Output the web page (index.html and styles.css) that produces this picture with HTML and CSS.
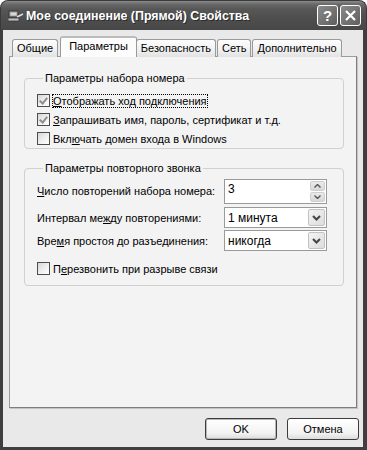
FILE: index.html
```html
<!DOCTYPE html>
<html lang="ru">

<head>
  <meta charset="UTF-8" />
  <title>Мое соединение (Прямой) Свойства</title>
  <link rel="stylesheet" href="styles.css">
</head>

<body>
  <div class="window">
    <div class="titlebar">
      <svg class="title-icon" width="16" height="14" viewBox="0 0 16 14">
        <rect x="1" y="2" width="9" height="6" fill="#9a9a9a" stroke="#3a3a3a" />
        <rect x="2.5" y="3.5" width="6" height="3" fill="#d8d8d8" />
        <path d="M9 8 L15 5" stroke="#e0e0e0" stroke-width="1.5" />
        <rect x="0" y="9" width="11" height="3" fill="#bdbdbd" stroke="#3a3a3a" stroke-width="0.8" />
      </svg>
      <span class="title">Мое соединение (Прямой) Свойства</span>
      <div class="caption-buttons">
        <span class="cap-btn">?</span>
        <span class="cap-btn">
          <svg width="13" height="13" viewBox="0 0 13 13">
            <path d="M2 2 L11 11 M11 2 L2 11" stroke="#fff" stroke-width="2.2" />
          </svg>
        </span>
      </div>
    </div>

    <div class="frame">
      <div class="tabs">
        <div class="tab">Общие</div>
        <div class="tab active">Параметры</div>
        <div class="tab">Безопасность</div>
        <div class="tab">Сеть</div>
        <div class="tab">Дополнительно</div>
      </div>

      <div class="panel">
        <!-- набор номера -->
        <fieldset class="group group-dial">
          <legend>Параметры набора номера</legend>
          <div class="check-row">
            <span class="box checked"></span>
            <span class="focus"><u>О</u>тображать ход подключения</span>
          </div>
          <div class="check-row">
            <span class="box checked"></span>
            <span><u>З</u>апрашивать имя, пароль, сертификат и т.д.</span>
          </div>
          <div class="check-row">
            <span class="box"></span>
            <span>Вкл<u>ю</u>чать домен входа в Windows</span>
          </div>
        </fieldset>

        <!-- повторный звонок -->
        <fieldset class="group group-redial">
          <legend>Параметры повторного звонка</legend>
          <div class="field-row field-spin">
            <span class="field-label"><u>Ч</u>исло повторений набора номера:</span>
            <div class="spin">
              <span class="value">3</span>
              <div class="spin-btns">
                <span class="spin-btn">
                  <svg width="7" height="4" viewBox="0 0 7 4"><path d="M0.5 3.5 L3.5 0.5 L6.5 3.5" fill="none" stroke="#555" stroke-width="1.4" /></svg>
                </span>
                <span class="spin-btn">
                  <svg width="7" height="4" viewBox="0 0 7 4"><path d="M0.5 0.5 L3.5 3.5 L6.5 0.5" fill="none" stroke="#555" stroke-width="1.4" /></svg>
                </span>
              </div>
            </div>
          </div>
          <div class="field-row">
            <span class="field-label">Интервал ме<u>ж</u>ду повторениями:</span>
            <div class="combo">
              <span class="value">1 минута</span>
              <span class="combo-btn">
                <svg width="9" height="6" viewBox="0 0 9 6"><path d="M1 1 L4.5 4.5 L8 1" fill="none" stroke="#444" stroke-width="2" /></svg>
              </span>
            </div>
          </div>
          <div class="field-row">
            <span class="field-label">Вре<u>м</u>я простоя до разъединения:</span>
            <div class="combo">
              <span class="value">никогда</span>
              <span class="combo-btn">
                <svg width="9" height="6" viewBox="0 0 9 6"><path d="M1 1 L4.5 4.5 L8 1" fill="none" stroke="#444" stroke-width="2" /></svg>
              </span>
            </div>
          </div>
          <div class="check-row check-last">
            <span class="box"></span>
            <span>П<u>е</u>резвонить при разрыве связи</span>
          </div>
        </fieldset>
      </div>

      <div class="buttons">
        <button class="btn btn-default">OK</button>
        <button class="btn">Отмена</button>
      </div>
    </div>
  </div>
</body>

</html>
```

FILE: styles.css
```css
/* --- BASE --- */
* {
  margin: 0;
  padding: 0;
  box-sizing: border-box;
}

body {
  background: #fff;
  font-family: "Liberation Sans", Arial, sans-serif;
  font-size: 11px;
  color: #000;
}

.window {
  width: 367px;
  height: 450px;
  display: flex;
  flex-direction: column;
}

/* --- TITLE BAR --- */
.titlebar {
  height: 30px;
  display: flex;
  align-items: center;
  padding: 0 5px 0 7px;
  border-radius: 8px 8px 0 0;
  background: linear-gradient(#8c8c8c 0, #6a6a6a 3px, #575757 8px, #4e4e4e 60%, #474747 100%);
  border: 1px solid #3a3a3a;
  border-bottom: none;
}

.title-icon {
  margin-right: 2px;
  flex-shrink: 0;
}

.title {
  flex: 1;
  color: #fff;
  font-weight: bold;
  font-size: 12.4px;
  text-shadow: 1px 1px 0 #2a2a2a;
  white-space: nowrap;
}

.caption-buttons {
  display: flex;
  gap: 2px;
}

.cap-btn {
  width: 21px;
  height: 21px;
  display: flex;
  align-items: center;
  justify-content: center;
  border: 1px solid #fff;
  border-radius: 3px;
  background: linear-gradient(135deg, #8a8a8a, #5e5e5e);
  color: #fff;
  font-weight: bold;
  font-size: 15px;
}

/* --- FRAME --- */
.frame {
  flex: 1;
  display: flex;
  flex-direction: column;
  background: #e9e9e9;
  border-left: 3px solid #3f3f3f;
  border-right: 4px solid #3f3f3f;
  border-bottom: 3px solid #3f3f3f;
  padding: 6px 3px 0 6px;
}

/* --- TABS --- */
.tabs {
  display: flex;
  align-items: flex-end;
  height: 21px;
  padding-left: 3px;
  gap: 1px;
  position: relative;
  z-index: 1;
}

.tab {
  height: 18px;
  padding: 0 4px;
  line-height: 16px;
  border: 1px solid #9a9a9a;
  border-bottom: none;
  border-radius: 3px 3px 0 0;
  background: linear-gradient(#fdfdfd, #f0f0f0 60%, #e2e2e2);
  white-space: nowrap;
}

.tab.active {
  height: 21px;
  margin-left: 1px;
  margin-right: -2px;
  padding: 0 8px;
  line-height: 17px;
  background: #fcfcfc;
  border-top: 2px solid #bcbcbc;
}

/* --- PANEL --- */
.panel {
  height: 352px;
  width: 348px;
  margin-top: -1px;
  background: #f3f3f3;
  border: 1px solid #9c9c9c;
  border-right-color: #7e7e7e;
  border-bottom-color: #7e7e7e;
  box-shadow: 1px 1px 0 #c4c4c4;
  padding: 14px 12px 0 14px;
}

.group {
  border: 1px solid #d0d0d0;
  border-radius: 4px;
  padding: 0 0 0 12px;
}

.group legend {
  margin-left: 6px;
  padding: 0 2px;
  line-height: 14px;
}

.group-dial {
  height: 78px;
  padding-top: 6px;
}

.group-redial {
  margin-top: 12px;
  height: 125px;
  padding-top: 1px;
  padding-right: 16px;
}

/* --- CHECKBOX --- */
.check-row {
  display: flex;
  align-items: center;
  gap: 3px;
  height: 19px;
  white-space: nowrap;
}

.box {
  width: 13px;
  height: 13px;
  border: 1px solid #4d4d4d;
  background: linear-gradient(135deg, #d6d6d6, #f2f2f2 60%, #fff);
  position: relative;
  flex-shrink: 0;
}

.box.checked::after {
  content: "";
  position: absolute;
  left: 3px;
  top: 1px;
  width: 3px;
  height: 6px;
  border: solid #8e8e8e;
  border-width: 0 2px 2px 0;
  transform: rotate(40deg);
}

.focus {
  outline: 1px dotted #000;
  outline-offset: 0;
}

.check-last {
  margin-top: 7px;
}

/* --- FIELDS --- */
.field-row {
  display: flex;
  align-items: center;
  justify-content: space-between;
  height: 23px;
}

.field-label {
  white-space: nowrap;
}

.field-spin {
  height: 30px;
}

.spin,
.combo {
  width: 103px;
  display: flex;
  align-items: center;
  border: 1px solid #9a9a9a;
  background: #fff;
  padding: 1px 1px 1px 3px;
  font-size: 12px;
}

.spin {
  height: 25px;
}

.combo {
  height: 21px;
}

.spin .value,
.combo .value {
  flex: 1;
}

.spin .value {
  align-self: flex-start;
  margin-top: 1px;
}

.spin-btns {
  width: 15px;
  height: 21px;
  display: flex;
  flex-direction: column;
  gap: 1px;
}

.spin-btn {
  flex: 1;
  display: flex;
  align-items: center;
  justify-content: center;
  background: linear-gradient(#eaeaea, #d8d8d8);
  border: 1px solid #cfcfcf;
  border-radius: 2px;
}

.combo-btn {
  width: 17px;
  height: 17px;
  display: flex;
  align-items: center;
  justify-content: center;
  background: linear-gradient(135deg, #f4f4f4, #dcdcdc);
  border: 1px solid #c2c2c2;
  border-radius: 2px;
}

/* --- BUTTONS --- */
.buttons {
  display: flex;
  justify-content: flex-end;
  gap: 10px;
  margin-top: 10px;
  padding-right: 1px;
}

.btn {
  width: 72px;
  height: 22px;
  font-family: "Liberation Sans", Arial, sans-serif;
  font-size: 11px;
  color: #000;
  background: linear-gradient(#fff, #f3f3f3 70%, #dcdcdc);
  border: 1px solid #3c3c3c;
  border-radius: 3px;
}

.btn-default {
  box-shadow: inset 0 0 0 1px #b8b8b8;
}
```
